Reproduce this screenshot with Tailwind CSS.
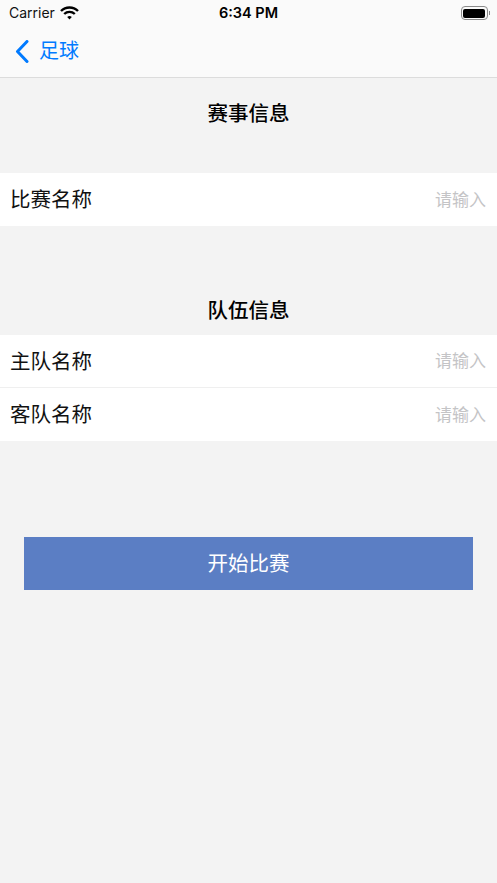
<!DOCTYPE html>
<html lang="zh-CN">
<head>
<meta charset="utf-8">
<script src="https://cdn.jsdelivr.net/npm/@tailwindcss/browser@4"></script>
</head>
<body class="m-0">
<div class="w-[497px] h-[883px] bg-[#f3f3f3] overflow-hidden flex flex-col font-['Inter','Noto_Sans_CJK_SC',sans-serif]">
  <header class="h-[78px] shrink-0 bg-[#fafafa] border-b border-[#dcdcdc] flex flex-col">
    <div class="h-[26px] flex items-center justify-between pl-[9px] pr-[7px] relative">
      <div class="flex items-center gap-[5px]">
        <span class="text-[14px] leading-[26px] text-[#111] font-['Inter',sans-serif]">Carrier</span>
        <svg width="19" height="14" viewBox="0 0 19 14" class="-mt-[1px]">
          <path d="M1 5 A12 12 0 0 1 18 5" fill="none" stroke="#000" stroke-width="2.4"/>
          <path d="M4.2 8 A7.6 7.6 0 0 1 14.8 8" fill="none" stroke="#000" stroke-width="2.4"/>
          <path d="M7.2 11 L9.5 13.6 L11.8 11 A3.4 3.4 0 0 0 7.2 11 Z" fill="#000"/>
        </svg>
      </div>
      <span class="absolute left-0 right-0 text-center text-[14.5px] leading-[26px] font-semibold text-black font-['Inter',sans-serif]">6:34 PM</span>
      <div class="flex items-center gap-[1px]">
        <div class="w-[27px] h-[14px] rounded-[4px] border border-[#8a8a8a] p-[1.5px]">
          <div class="w-full h-full bg-black rounded-[2px]"></div>
        </div>
        <div class="w-[1.5px] h-[4px] bg-[#8a8a8a]"></div>
      </div>
    </div>
    <div class="flex-1 flex items-center pl-[15px] gap-[10px] -mt-[1px]">
      <svg width="14" height="23" viewBox="0 0 14 23">
        <path d="M12 1.5 L2.5 11.5 L12 21.5" fill="none" stroke="#007aff" stroke-width="3" stroke-linecap="round" stroke-linejoin="round"/>
      </svg>
      <span class="text-[20px] leading-[28px] text-[#007aff]">足球</span>
    </div>
  </header>

  <div class="h-[71px] shrink-0 flex items-center justify-center pt-[2px] text-[20.5px] font-medium text-black">赛事信息</div>
  <div class="h-[24px] shrink-0"></div>
  <div class="h-[53px] shrink-0 bg-white flex items-center justify-between pt-[2px] pl-[10px] pr-[11px]">
    <span class="text-[20.5px] text-[#111]">比赛名称</span>
    <span class="text-[17px] text-[#c4c4c6]">请输入</span>
  </div>
  <div class="h-[109px] shrink-0 pt-[61px] flex items-center justify-center text-[20.5px] font-medium text-black">队伍信息</div>
  <div class="h-[53px] shrink-0 bg-white border-b border-[#efefef] flex items-center justify-between pt-[2px] pl-[10px] pr-[11px]">
    <span class="text-[20.5px] text-[#111]">主队名称</span>
    <span class="text-[17px] text-[#c4c4c6]">请输入</span>
  </div>
  <div class="h-[53px] shrink-0 bg-white flex items-center justify-between pt-[2px] pl-[10px] pr-[11px]">
    <span class="text-[20.5px] text-[#111]">客队名称</span>
    <span class="text-[17px] text-[#c4c4c6]">请输入</span>
  </div>
  <div class="mt-[96px] ml-[24px] w-[449px] h-[53px] shrink-0 bg-[#5b7ec4] flex items-center justify-center pt-[1px] text-[20.5px] text-white">开始比赛</div>
</div>
</body>
</html>
